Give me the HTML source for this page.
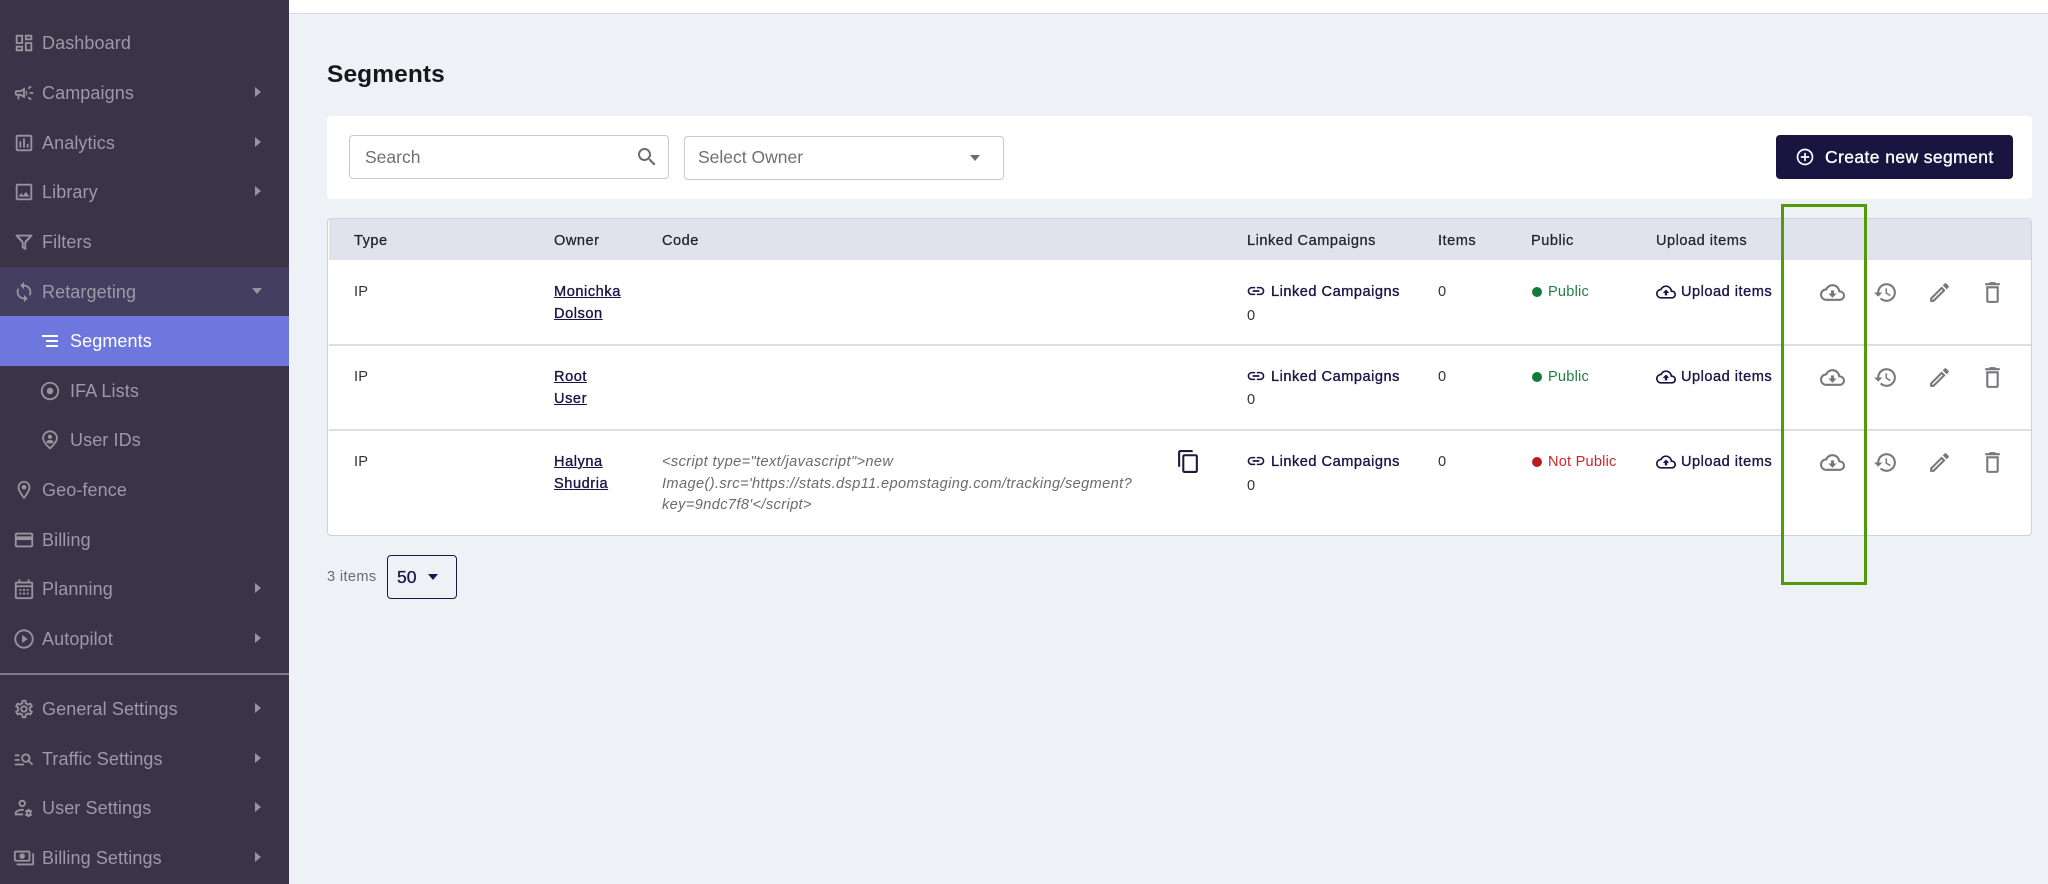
<!DOCTYPE html>
<html><head><meta charset="utf-8"><title>Segments</title>
<style>
html,body{margin:0;padding:0}
body{width:2048px;height:884px;position:relative;overflow:hidden;background:#eef1f6;font-family:"Liberation Sans",sans-serif;color:#222;filter:blur(.35px)}
.a{position:absolute}
.t{position:absolute;line-height:20px;height:20px;white-space:nowrap}
#side{position:absolute;left:0;top:0;width:289px;height:884px;background:#3b3347}
.n{font-size:18px;color:#9c9aa6;letter-spacing:.1px}
.i{position:absolute;width:22px;height:22px;fill:#96949f}
.ar{position:absolute;left:255px;width:0;height:0;border-left:6px solid #96949f;border-top:5px solid transparent;border-bottom:5px solid transparent}
.h{font-size:14.6px;color:#23232b;letter-spacing:.5px;-webkit-text-stroke:.25px #23232b;margin-top:1px}
.b{font-size:14.6px;color:#33333a;letter-spacing:.2px;margin-top:1px}
.o{font-size:14.6px;color:#1b1545;text-decoration:underline;-webkit-text-stroke:.35px #1b1545;letter-spacing:.55px;margin-top:1px}
.l{font-size:14.6px;color:#1b1545;-webkit-text-stroke:.35px #1b1545;letter-spacing:.5px;margin-top:1px}
.c{font-size:14.6px;color:#6a6a72;font-style:italic;letter-spacing:.38px;margin-top:1px}
.p{font-size:14.6px;letter-spacing:.2px;margin-top:1px}
.g{position:absolute;width:25px;height:25px;fill:#77777c}
.nv{position:absolute;width:20px;height:20px;fill:#1b1545}
.d{position:absolute;width:10px;height:10px;border-radius:50%;margin-top:1px}
.line{position:absolute;left:329px;width:1702px;height:2px;background:#dcdde6}
</style></head><body>
<svg width="0" height="0" style="position:absolute">
<symbol id="dash" viewBox="0 0 24 24"><path d="M19 5v2h-4V5h4M9 5v6H5V5h4m10 8v6h-4v-6h4M9 17v2H5v-2h4M21 3h-8v6h8V3zM11 3H3v10h8V3zm10 8h-8v10h8V11zm-10 4H3v6h8v-6z"/></symbol>
<symbol id="camp" viewBox="0 0 24 24"><path d="M18 11v2h4v-2h-4zm-2 6.61c.96.71 2.21 1.65 3.2 2.39.4-.53.8-1.07 1.2-1.6-.99-.74-2.24-1.68-3.2-2.4-.4.54-.8 1.08-1.2 1.61zM20.4 5.6c-.4-.53-.8-1.07-1.2-1.6-.99.74-2.24 1.68-3.2 2.4.4.53.8 1.07 1.2 1.6.96-.72 2.21-1.65 3.2-2.4zM4 9c-1.1 0-2 .9-2 2v2c0 1.1.9 2 2 2h1v4h2v-4h1l5 3V6L8 9H4zm5.03 1.71L11 9.53v4.94l-1.97-1.18-.48-.29H4v-2h4.55l.48-.29zM15.5 12c0-1.33-.58-2.53-1.5-3.35v6.69c.92-.81 1.5-2.01 1.5-3.34z"/></symbol>
<symbol id="ana" viewBox="0 0 24 24"><path d="M19 3H5c-1.1 0-2 .9-2 2v14c0 1.1.9 2 2 2h14c1.1 0 2-.9 2-2V5c0-1.1-.9-2-2-2zm0 16H5V5h14v14zM7 10h2v7H7zm4-3h2v10h-2zm4 6h2v4h-2z"/></symbol>
<symbol id="img" viewBox="0 0 24 24"><path d="M19 5v14H5V5h14m0-2H5c-1.1 0-2 .9-2 2v14c0 1.1.9 2 2 2h14c1.1 0 2-.9 2-2V5c0-1.1-.9-2-2-2zm-4.86 8.86l-3 3.87L9 13.14 6 17h12l-3.86-5.14z"/></symbol>
<symbol id="fil" viewBox="0 0 24 24"><path d="M3 4h18v1.6L14.4 13v8l-4.8-2.6V13L3 5.6V4zm3.6 2l5 5.7V17l.8.5v-5.800L17.400 6H6.600z"/></symbol>
<symbol id="sync" viewBox="0 0 24 24"><path d="M12 4V1L8 5l4 4V6c3.31 0 6 2.69 6 6 0 1.01-.25 1.97-.7 2.8l1.46 1.46C19.54 15.03 20 13.57 20 12c0-4.42-3.58-8-8-8zm0 14c-3.31 0-6-2.69-6-6 0-1.01.25-1.97.7-2.8L5.24 7.74C4.46 8.97 4 10.43 4 12c0 4.42 3.58 8 8 8v3l4-4-4-4v3z"/></symbol>
<symbol id="rad" viewBox="0 0 24 24"><path d="M12 8.500c-1.930 0-3.500 1.570-3.500 3.500s1.570 3.500 3.500 3.500 3.500-1.570 3.500-3.500-1.570-3.500-3.500-3.500zm0-6.500C6.480 2 2 6.480 2 12s4.480 10 10 10 10-4.480 10-10S17.520 2 12 2zm0 18c-4.420 0-8-3.580-8-8s3.580-8 8-8 8 3.580 8 8-3.580 8-8 8z"/></symbol>
<symbol id="upin" viewBox="0 0 24 24"><path d="M12 1.500c-4.700 0-8.500 3.600-8.500 8.300 0 3.600 2.800 7.500 8.500 12.700 5.700-5.200 8.500-9.100 8.500-12.700 0-4.700-3.800-8.300-8.500-8.300zm0 18.300c-4.400-4.200-6.500-7.300-6.500-10 0-3.600 2.900-6.300 6.500-6.300s6.500 2.700 6.500 6.300c0 2.700-2.100 5.800-6.500 10z"/><circle cx="12" cy="8.500" r="2.300"/><path d="M7.800 14.200c.9-1.600 2.500-2.300 4.200-2.300s3.300.7 4.200 2.300l-1.400 1.500H9.200z"/></symbol>
<symbol id="geo" viewBox="0 0 24 24"><path d="M12 2C8.130 2 5 5.130 5 9c0 5.250 7 13 7 13s7-7.750 7-13c0-3.870-3.130-7-7-7zM7 9c0-2.760 2.240-5 5-5s5 2.240 5 5c0 2.880-2.880 7.190-5 9.880C9.920 16.210 7 11.850 7 9z"/><circle cx="12" cy="9" r="2.500"/></symbol>
<symbol id="card" viewBox="0 0 24 24"><path d="M20 4H4c-1.110 0-1.990.890-1.990 2L2 18c0 1.110.890 2 2 2h16c1.110 0 2-.890 2-2V6c0-1.110-.890-2-2-2zm0 14H4v-6h16v6zm0-10H4V6h16v2z"/></symbol>
<symbol id="cal" viewBox="0 0 24 24"><path d="M20 4h-2V1.500h-2V4H8V1.500H6V4H4c-1.100 0-2 .9-2 2v15c0 1.100.9 2 2 2h16c1.100 0 2-.9 2-2V6c0-1.100-.9-2-2-2zm0 17H4V10h16v11zM4 8V6h16v2H4z"/><path d="M7 12h2.200v2H7zm3.900 0h2.200v2h-2.200zm3.900 0H17v2h-2.200zM7 16h2.200v2H7zm3.900 0h2.200v2h-2.200zm3.900 0H17v2h-2.200z"/></symbol>
<symbol id="play" viewBox="0 0 24 24"><path d="M10 7.500v9l6-4.500zM12 1.500C6.200 1.500 1.500 6.200 1.500 12S6.200 22.500 12 22.500 22.500 17.800 22.500 12 17.800 1.500 12 1.500zm0 19c-4.700 0-8.500-3.800-8.500-8.500S7.300 3.500 12 3.500s8.500 3.800 8.500 8.500-3.800 8.500-8.500 8.500z"/></symbol>
<symbol id="gear" viewBox="0 0 24 24"><path d="M19.430 12.980c.04-.32.07-.64.07-.98 0-.34-.03-.66-.07-.98l2.110-1.650c.19-.15.24-.42.12-.64l-2-3.460c-.09-.16-.26-.25-.44-.25-.06 0-.12.01-.17.03l-2.490 1c-.52-.4-1.080-.73-1.690-.98l-.38-2.650C14.460 2.180 14.250 2 14 2h-4c-.25 0-.46.18-.49.42l-.38 2.650c-.61.25-1.170.59-1.690.98l-2.490-1c-.06-.02-.12-.03-.18-.03-.17 0-.34.09-.43.25l-2 3.460c-.13.22-.07.49.12.64l2.110 1.650c-.04.32-.07.65-.07.98 0 .33.03.66.07.98l-2.110 1.650c-.19.15-.24.42-.12.64l2 3.460c.09.16.26.25.44.25.06 0 .12-.01.17-.03l2.490-1c.52.4 1.080.73 1.690.98l.38 2.650c.03.24.24.42.49.42h4c.25 0 .46-.18.49-.42l.38-2.650c.61-.25 1.170-.59 1.690-.98l2.490 1c.06.02.12.03.18.03.17 0 .34-.09.43-.25l2-3.460c.12-.22.07-.49-.12-.64l-2.110-1.650zm-1.980-1.710c.04.31.05.52.05.73 0 .21-.02.43-.05.73l-.14 1.130.89.7 1.080.84-.7 1.210-1.270-.51-1.040-.42-.9.68c-.43.32-.84.56-1.250.73l-1.060.43-.16 1.130-.2 1.350h-1.400l-.19-1.350-.16-1.130-1.060-.43c-.43-.18-.83-.41-1.230-.71l-.91-.7-1.060.43-1.270.51-.7-1.210 1.080-.84.89-.7-.14-1.130c-.03-.31-.05-.54-.05-.74s.02-.43.05-.73l.14-1.130-.89-.7-1.080-.84.7-1.210 1.270.51 1.040.42.9-.68c.43-.32.84-.56 1.250-.73l1.060-.43.16-1.130.2-1.350h1.390l.19 1.350.16 1.130 1.060.43c.43.18.83.41 1.230.71l.91.7 1.060-.43 1.270-.51.7 1.210-1.070.85-.89.7.14 1.130zM12 8c-2.210 0-4 1.790-4 4s1.790 4 4 4 4-1.790 4-4-1.790-4-4-4zm0 6c-1.100 0-2-.9-2-2s.9-2 2-2 2 .9 2 2-.9 2-2 2z"/></symbol>
<symbol id="msr" viewBox="0 0 24 24"><path d="M7 9H2V7h5v2zm0 3H2v2h5v-2zm13.590 7l-3.830-3.830c-.8.520-1.740.830-2.760.830-2.760 0-5-2.240-5-5s2.240-5 5-5 5 2.240 5 5c0 1.020-.31 1.960-.83 2.750L22 17.590 20.590 19zM17 11c0-1.650-1.350-3-3-3s-3 1.350-3 3 1.350 3 3 3 3-1.350 3-3zM2 19h10v-2H2v2z"/></symbol>
<symbol id="uset" viewBox="0 0 24 24"><path d="M10 3c-2.200 0-4 1.800-4 4s1.800 4 4 4 4-1.800 4-4-1.800-4-4-4zm0 6c-1.100 0-2-.9-2-2s.9-2 2-2 2 .9 2 2-.9 2-2 2zM2 20v-2.500c0-2.700 4.800-4.500 8-4.500.7 0 1.400.1 2.100.2l-.9 1.900c-.4-.1-.8-.1-1.200-.1-2.500 0-6 1.300-6 2.500v.5h7v2H2z"/><path d="M18 13l.5 1.500 1.400-.4 1 1.700-1.100 1 .1.700-.1.700 1.100 1-1 1.700-1.400-.4L18 22h-2l-.5-1.500-1.400.4-1-1.700 1.100-1-.1-.7.1-.7-1.100-1 1-1.700 1.400.4L16 13h2zm-1 3.300c-.7 0-1.200.5-1.200 1.200s.5 1.200 1.200 1.200 1.200-.5 1.200-1.200-.5-1.200-1.200-1.200z"/></symbol>
<symbol id="pay" viewBox="0 0 24 24"><path d="M19 14V6c0-1.100-.9-2-2-2H3c-1.100 0-2 .9-2 2v8c0 1.100.9 2 2 2h14c1.100 0 2-.9 2-2zm-2 0H3V6h14v8zm-7-7c-1.660 0-3 1.340-3 3s1.340 3 3 3 3-1.340 3-3-1.340-3-3-3zm13 0v11c0 1.100-.9 2-2 2H4v-2h17V7h2z"/></symbol>
<symbol id="srch" viewBox="0 0 24 24"><path d="M15.500 14h-.79l-.28-.27C15.410 12.590 16 11.110 16 9.500 16 5.910 13.090 3 9.500 3S3 5.910 3 9.500 5.910 16 9.500 16c1.610 0 3.090-.59 4.230-1.570l.27.28v.79l5 4.990L20.490 19l-4.990-5zm-6 0C7.010 14 5 11.990 5 9.500S7.010 5 9.500 5 14 7.010 14 9.500 11.990 14 9.500 14z"/></symbol>
<symbol id="plus" viewBox="0 0 24 24"><path d="M13 7h-2v4H7v2h4v4h2v-4h4v-2h-4V7zm-1-5C6.480 2 2 6.480 2 12s4.480 10 10 10 10-4.480 10-10S17.520 2 12 2zm0 18c-4.410 0-8-3.590-8-8s3.590-8 8-8 8 3.590 8 8-3.590 8-8 8z"/></symbol>
<symbol id="link" viewBox="0 0 24 24"><path d="M3.900 12c0-1.710 1.390-3.100 3.100-3.100h4V7H7c-2.760 0-5 2.240-5 5s2.240 5 5 5h4v-1.900H7c-1.710 0-3.100-1.390-3.100-3.100zM8 13h8v-2H8v2zm9-6h-4v1.900h4c1.710 0 3.100 1.390 3.100 3.100s-1.390 3.100-3.100 3.100h-4V17h4c2.760 0 5-2.240 5-5s-2.240-5-5-5z"/></symbol>
<symbol id="up" viewBox="0 0 24 24"><path d="M19.350 10.040C18.670 6.590 15.640 4 12 4 9.110 4 6.600 5.640 5.350 8.040 2.340 8.360 0 10.910 0 14c0 3.310 2.690 6 6 6h13c2.760 0 5-2.240 5-5 0-2.640-2.050-4.780-4.650-4.960zM19 18H6c-2.210 0-4-1.790-4-4 0-2.050 1.530-3.760 3.560-3.970l1.070-.11.5-.95C8.080 7.140 9.940 6 12 6c2.620 0 4.880 1.860 5.390 4.430l.3 1.500 1.530.11c1.560.1 2.780 1.410 2.780 2.960 0 1.650-1.350 3-3 3zM8 13h2.550v3h2.900v-3H16l-4-4z"/></symbol>
<symbol id="down" viewBox="0 0 24 24"><path d="M19.350 10.040C18.670 6.590 15.640 4 12 4 9.110 4 6.600 5.640 5.350 8.040 2.340 8.360 0 10.910 0 14c0 3.310 2.690 6 6 6h13c2.760 0 5-2.240 5-5 0-2.640-2.050-4.780-4.650-4.960zM19 18H6c-2.210 0-4-1.790-4-4 0-2.050 1.530-3.760 3.560-3.970l1.070-.11.5-.95C8.080 7.140 9.940 6 12 6c2.620 0 4.880 1.860 5.390 4.430l.3 1.500 1.530.11c1.560.1 2.780 1.410 2.780 2.960 0 1.650-1.350 3-3 3zM16 13h-2.550v-3h-2.900v3H8l4 4z"/></symbol>
<symbol id="hist" viewBox="0 0 24 24"><path d="M13 3c-4.970 0-9 4.030-9 9H1l3.890 3.890.07.14L9 12H6c0-3.870 3.130-7 7-7s7 3.130 7 7-3.130 7-7 7c-1.930 0-3.680-.79-4.940-2.060l-1.420 1.420C8.270 19.990 10.510 21 13 21c4.970 0 9-4.030 9-9s-4.030-9-9-9zm-1 5v5l4.280 2.540.72-1.210-3.500-2.080V8H12z"/></symbol>
<symbol id="pen" viewBox="0 0 24 24"><path d="M14.060 9.020l.92.92L5.920 19H5v-.92l9.060-9.060M17.660 3c-.25 0-.51.1-.7.29l-1.830 1.830 3.750 3.750 1.830-1.830c.39-.39.39-1.020 0-1.410l-2.340-2.340c-.2-.2-.45-.29-.71-.29zm-3.600 3.190L3 17.250V21h3.750L17.810 9.940l-3.750-3.750z"/></symbol>
<symbol id="del" viewBox="0 0 24 24"><path d="M16 8v12H8V8h8m-1.500-6h-5l-1 1H5v2h14V3h-3.500l-1-1zM18 6H6v14c0 1.100.9 2 2 2h8c1.100 0 2-.9 2-2V6z"/></symbol>
<symbol id="copy" viewBox="0 0 24 24"><path d="M16 1H4c-1.100 0-2 .9-2 2v14h2V3h12V1zm3 4H8c-1.100 0-2 .9-2 2v14c0 1.100.9 2 2 2h11c1.100 0 2-.9 2-2V7c0-1.100-.9-2-2-2zm0 16H8V7h11v14z"/></symbol>
</svg>

<div id="side">
<div class="a" style="left:0;top:267px;width:289px;height:49px;background:#443e60"></div>
<div class="a" style="left:0;top:316px;width:289px;height:50px;background:#6d77dd"></div>
<div class="a" style="left:0;top:673px;width:289px;height:2px;background:#7d7a88"></div>

<svg class="i" style="left:13px;top:32px"><use href="#dash"/></svg><div class="t n" style="left:42px;top:33px">Dashboard</div>
<svg class="i" style="left:13px;top:82px"><use href="#camp"/></svg><div class="t n" style="left:42px;top:83px">Campaigns</div><div class="ar" style="top:87px"></div>
<svg class="i" style="left:13px;top:132px"><use href="#ana"/></svg><div class="t n" style="left:42px;top:133px">Analytics</div><div class="ar" style="top:137px"></div>
<svg class="i" style="left:13px;top:181px"><use href="#img"/></svg><div class="t n" style="left:42px;top:182px">Library</div><div class="ar" style="top:186px"></div>
<svg class="i" style="left:13px;top:231px"><use href="#fil"/></svg><div class="t n" style="left:42px;top:232px">Filters</div>
<svg class="i" style="left:13px;top:281px"><use href="#sync"/></svg><div class="t n" style="left:42px;top:282px">Retargeting</div>
<div class="a" style="left:252px;top:288px;width:0;height:0;border-top:6px solid #96949f;border-left:5.500px solid transparent;border-right:5.500px solid transparent"></div>
<svg class="i" style="left:39px;top:330px;fill:#fff"><path d="M3 5h16v2H3zM7 10h12v2H7zM7 15h12v2H7z"/></svg><div class="t n" style="left:70px;top:331px;color:#fff">Segments</div>
<svg class="i" style="left:39px;top:380px"><use href="#rad"/></svg><div class="t n" style="left:70px;top:381px">IFA Lists</div>
<svg class="i" style="left:39px;top:429px"><use href="#upin"/></svg><div class="t n" style="left:70px;top:430px">User IDs</div>
<svg class="i" style="left:13px;top:479px"><use href="#geo"/></svg><div class="t n" style="left:42px;top:480px">Geo-fence</div>
<svg class="i" style="left:13px;top:529px"><use href="#card"/></svg><div class="t n" style="left:42px;top:530px">Billing</div>
<svg class="i" style="left:13px;top:578px"><use href="#cal"/></svg><div class="t n" style="left:42px;top:579px">Planning</div><div class="ar" style="top:583px"></div>
<svg class="i" style="left:13px;top:628px"><use href="#play"/></svg><div class="t n" style="left:42px;top:629px">Autopilot</div><div class="ar" style="top:633px"></div>
<svg class="i" style="left:13px;top:698px"><use href="#gear"/></svg><div class="t n" style="left:42px;top:699px">General Settings</div><div class="ar" style="top:703px"></div>
<svg class="i" style="left:13px;top:748px"><use href="#msr"/></svg><div class="t n" style="left:42px;top:749px">Traffic Settings</div><div class="ar" style="top:753px"></div>
<svg class="i" style="left:13px;top:797px"><use href="#uset"/></svg><div class="t n" style="left:42px;top:798px">User Settings</div><div class="ar" style="top:802px"></div>
<svg class="i" style="left:13px;top:847px"><use href="#pay"/></svg><div class="t n" style="left:42px;top:848px">Billing Settings</div><div class="ar" style="top:852px"></div>
</div>

<div class="a" style="left:289px;top:0;width:1759px;height:13px;background:#fff;border-bottom:1px solid #d9dbe3"></div>

<div class="t" style="left:327px;top:65px;font-size:24.500px;font-weight:bold;color:#17171c;letter-spacing:.1px">Segments</div>

<div class="a" style="left:327px;top:116px;width:1705px;height:83px;background:#fff;border-radius:4px"></div>
<div class="a" style="left:349px;top:135px;width:318px;height:42px;background:#fff;border:1.500px solid #c9c9d6;border-radius:4px"></div>
<div class="t" style="left:365px;top:147px;font-size:17.500px;color:#6f6f76">Search</div>
<svg class="a" style="left:635px;top:145px;width:24px;height:24px;fill:#6a6a70"><use href="#srch"/></svg>
<div class="a" style="left:684px;top:136px;width:318px;height:42px;background:#fff;border:1.500px solid #c9c9d6;border-radius:4px"></div>
<div class="t" style="left:698px;top:147px;font-size:17.500px;color:#6f6f76">Select Owner</div>
<div class="a" style="left:970px;top:155px;width:0;height:0;border-top:6px solid #6a6a70;border-left:5.500px solid transparent;border-right:5.500px solid transparent"></div>

<div class="a" style="left:1776px;top:135px;width:237px;height:44px;background:#1a1440;border-radius:4px"></div>
<svg class="a" style="left:1795px;top:147px;width:20px;height:20px;fill:#fff"><use href="#plus"/></svg>
<div class="t" style="left:1825px;top:147px;font-size:17.500px;color:#fff;letter-spacing:.4px;-webkit-text-stroke:.35px #fff">Create new segment</div>

<div class="a" style="left:327px;top:218px;width:1703px;height:316px;background:#fff;border:1.500px solid #cfd2db;border-radius:4px"></div>
<div class="a" style="left:329px;top:219px;width:1702px;height:41px;background:#e0e3ed"></div>
<div class="line" style="top:344px"></div>
<div class="line" style="top:429px"></div>

<div class="t h" style="left:354px;top:230px">Type</div>
<div class="t h" style="left:554px;top:230px">Owner</div>
<div class="t h" style="left:662px;top:230px">Code</div>
<div class="t h" style="left:1247px;top:230px">Linked Campaigns</div>
<div class="t h" style="left:1438px;top:230px">Items</div>
<div class="t h" style="left:1531px;top:230px">Public</div>
<div class="t h" style="left:1656px;top:230px">Upload items</div>

<!-- row 1 -->
<div class="t b" style="left:354px;top:281px">IP</div>
<div class="t o" style="left:554px;top:281px">Monichka</div><div class="t o" style="left:554px;top:303px">Dolson</div>
<svg class="a" style="left:1246px;top:281px;width:20px;height:20px;fill:#1b1545"><use href="#link"/></svg>
<div class="t l" style="left:1271px;top:281px">Linked Campaigns</div><div class="t b" style="left:1247px;top:305px">0</div>
<div class="t b" style="left:1438px;top:281px">0</div>
<div class="d" style="left:1532px;top:286px;background:#127a3c"></div><div class="t p" style="left:1548px;top:281px;color:#1f7f45">Public</div>
<svg class="nv" style="left:1656px;top:282px"><use href="#up"/></svg><div class="t l" style="left:1681px;top:281px">Upload items</div>
<svg class="g" style="left:1820px;top:280px"><use href="#down"/></svg>
<svg class="g" style="left:1873px;top:280px"><use href="#hist"/></svg>
<svg class="g" style="left:1927px;top:280px"><use href="#pen"/></svg>
<svg class="g" style="left:1980px;top:280px"><use href="#del"/></svg>

<!-- row 2 -->
<div class="t b" style="left:354px;top:366px">IP</div>
<div class="t o" style="left:554px;top:366px">Root</div><div class="t o" style="left:554px;top:388px">User</div>
<svg class="a" style="left:1246px;top:366px;width:20px;height:20px;fill:#1b1545"><use href="#link"/></svg>
<div class="t l" style="left:1271px;top:366px">Linked Campaigns</div><div class="t b" style="left:1247px;top:389px">0</div>
<div class="t b" style="left:1438px;top:366px">0</div>
<div class="d" style="left:1532px;top:371px;background:#127a3c"></div><div class="t p" style="left:1548px;top:366px;color:#1f7f45">Public</div>
<svg class="nv" style="left:1656px;top:367px"><use href="#up"/></svg><div class="t l" style="left:1681px;top:366px">Upload items</div>
<svg class="g" style="left:1820px;top:365px"><use href="#down"/></svg>
<svg class="g" style="left:1873px;top:365px"><use href="#hist"/></svg>
<svg class="g" style="left:1927px;top:365px"><use href="#pen"/></svg>
<svg class="g" style="left:1980px;top:365px"><use href="#del"/></svg>

<!-- row 3 -->
<div class="t b" style="left:354px;top:451px">IP</div>
<div class="t o" style="left:554px;top:451px">Halyna</div><div class="t o" style="left:554px;top:473px">Shudria</div>
<div class="t c" style="left:662px;top:451px">&lt;script type="text/javascript"&gt;new</div>
<div class="t c" style="left:662px;top:473px">Image().src='https://stats.dsp11.epomstaging.com/tracking/segment?</div>
<div class="t c" style="left:662px;top:494px">key=9ndc7f8'&lt;/script&gt;</div>
<svg class="a" style="left:1176px;top:449px;width:25px;height:25px;fill:#1b1b3a"><use href="#copy"/></svg>
<svg class="a" style="left:1246px;top:451px;width:20px;height:20px;fill:#1b1545"><use href="#link"/></svg>
<div class="t l" style="left:1271px;top:451px">Linked Campaigns</div><div class="t b" style="left:1247px;top:475px">0</div>
<div class="t b" style="left:1438px;top:451px">0</div>
<div class="d" style="left:1532px;top:456px;background:#b91c20"></div><div class="t p" style="left:1548px;top:451px;color:#c8282c">Not Public</div>
<svg class="nv" style="left:1656px;top:452px"><use href="#up"/></svg><div class="t l" style="left:1681px;top:451px">Upload items</div>
<svg class="g" style="left:1820px;top:450px"><use href="#down"/></svg>
<svg class="g" style="left:1873px;top:450px"><use href="#hist"/></svg>
<svg class="g" style="left:1927px;top:450px"><use href="#pen"/></svg>
<svg class="g" style="left:1980px;top:450px"><use href="#del"/></svg>

<div class="a" style="left:1781px;top:204px;width:80px;height:375px;border:3.500px solid #519a0b"></div>

<div class="t" style="left:327px;top:567px;font-size:14.600px;color:#6a6a72;letter-spacing:.35px">3 items</div>
<div class="a" style="left:387px;top:555px;width:68px;height:42px;border:1.500px solid #1b1545;border-radius:4px"></div>
<div class="t" style="left:397px;top:567px;font-size:17.500px;color:#1b1545;-webkit-text-stroke:.3px #1b1545">50</div>
<div class="a" style="left:428px;top:574px;width:0;height:0;border-top:6px solid #1b1545;border-left:5.500px solid transparent;border-right:5.500px solid transparent"></div>
</body></html>
